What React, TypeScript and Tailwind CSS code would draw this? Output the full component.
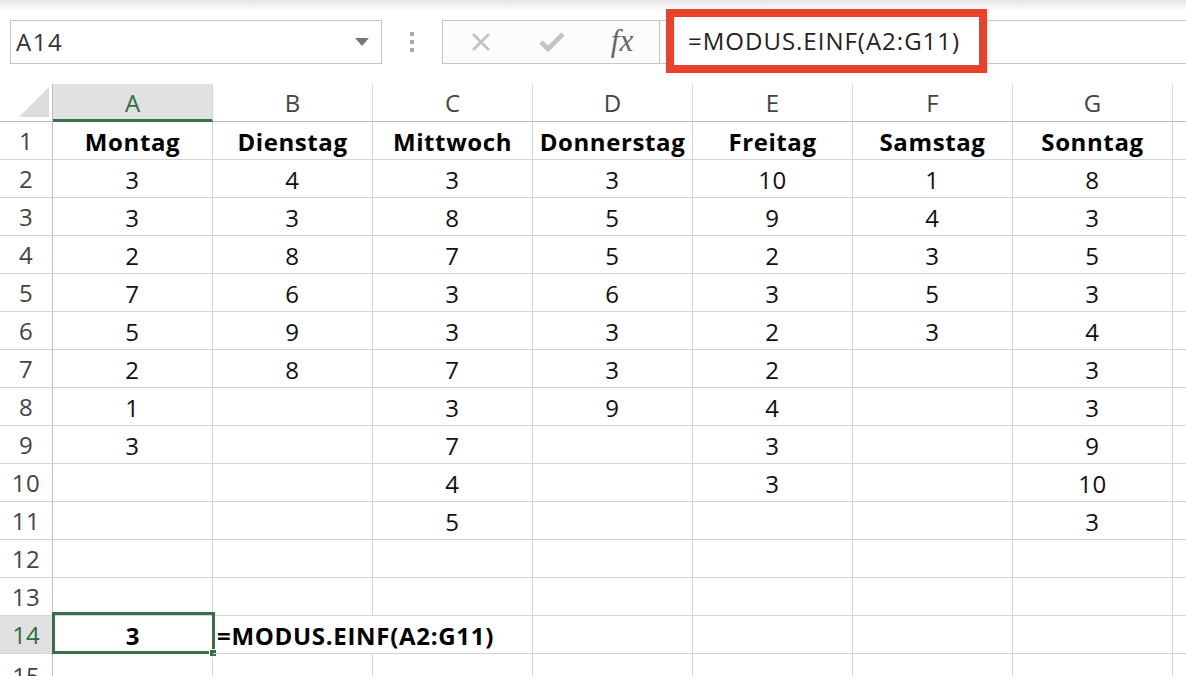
const cols = ["A", "B", "C", "D", "E", "F", "G"];

const rows: (string | number)[][] = [
  ["Montag", "Dienstag", "Mittwoch", "Donnerstag", "Freitag", "Samstag", "Sonntag"],
  [3, 4, 3, 3, 10, 1, 8],
  [3, 3, 8, 5, 9, 4, 3],
  [2, 8, 7, 5, 2, 3, 5],
  [7, 6, 3, 6, 3, 5, 3],
  [5, 9, 3, 3, 2, 3, 4],
  [2, 8, 7, 3, 2, "", 3],
  [1, "", 3, 9, 4, "", 3],
  [3, "", 7, "", 3, "", 9],
  ["", "", 4, "", 3, "", 10],
  ["", "", 5, "", "", "", 3],
  ["", "", "", "", "", "", ""],
  ["", "", "", "", "", "", ""],
];

const font = { fontFamily: '"Open Sans", "Noto Sans", sans-serif' };

export default function App() {
  return (
    <div className="w-[1186px] h-[676px] overflow-hidden bg-white text-[22px] text-[#222]" style={font}>
      {/* FORMULA BAR */}
      <div className="relative h-[84px] bg-gradient-to-b from-[#e6e6e6] via-white via-[14%] to-white">
        <div className="flex items-center pt-[20px] pl-[10px]">
          <div className="w-[372px] h-[44px] border border-[#c6c6c6] bg-white flex items-center justify-between pl-[5px] pr-[12px]">
            <span className="text-[#333] text-[24px] tracking-[1.5px]">A14</span>
            <span className="w-0 h-0 border-l-[7px] border-r-[7px] border-t-[8px] border-l-transparent border-r-transparent border-t-[#777]" />
          </div>
          <div className="w-[60px] flex flex-col items-center gap-[4px]">
            <span className="w-[4px] h-[4px] bg-[#a8a8a8]" />
            <span className="w-[4px] h-[4px] bg-[#a8a8a8]" />
            <span className="w-[4px] h-[4px] bg-[#a8a8a8]" />
          </div>
          <div className="w-[218px] h-[44px] border border-[#c6c6c6] bg-[#fcfcfc] flex items-center">
            <div className="w-[76px] flex justify-center">
              <svg width="22" height="22" viewBox="0 0 22 22" stroke="#c2c2c2" strokeWidth="2.6" fill="none">
                <path d="M3 3 L19 19 M19 3 L3 19" />
              </svg>
            </div>
            <div className="w-[66px] flex justify-center">
              <svg width="26" height="22" viewBox="0 0 26 22" stroke="#c4c4c4" strokeWidth="4.6" fill="none">
                <path d="M2 11 L9 18 L24 3" />
              </svg>
            </div>
            <div className="flex-1 flex justify-center">
              <span className="italic text-[31px] text-[#666] leading-none -mt-[4px]" style={{ fontFamily: '"Liberation Serif", serif' }}>
                fx
              </span>
            </div>
          </div>
          <div className="flex-1 h-[44px] border-y border-[#c6c6c6] bg-white" />
        </div>
        {/* highlight */}
        <div className="absolute left-[666px] top-[9px] w-[321px] h-[64px] border-[8px] border-[#e9412a] bg-white flex items-center pl-[14px]">
          <span className="text-[#222] text-[24px] tracking-[1px]">=MODUS.EINF(A2:G11)</span>
        </div>
      </div>

      {/* GRID */}
      <div className="grid grid-cols-[53px_repeat(7,160px)_1fr] auto-rows-[38px] text-[24px]">
        {/* header row */}
        <div className="border-r border-b border-[#bdbdbd] flex items-end justify-end pr-[3px] pb-[4px]">
          <svg width="30" height="30" viewBox="0 0 30 30">
            <path d="M30 0 L30 30 L0 30 Z" fill="#dcdcdc" />
          </svg>
        </div>
        {cols.map((c, i) => (
          <div
            key={c}
            className={
              i === 0
                ? "bg-[#e1e1e1] border-r border-[#d4d4d4] border-b-[3px] border-b-[#3b6e4a] flex items-center justify-center text-[#2f6b45] pt-[3px]"
                : "border-r border-b border-[#d9d9d9] border-b-[#bdbdbd] flex items-center justify-center text-[#444]"
            }
          >
            {c}
          </div>
        ))}
        <div className="border-b border-[#bdbdbd]" />

        {rows.map((r, ri) => (
          <Row key={ri} n={ri + 1} cells={r} bold={ri === 0} />
        ))}

        {/* row 14 */}
        <div className="bg-[#e1e1e1] border-r border-b border-[#bdbdbd] border-b-[#d4d4d4] flex items-center justify-center text-[#2f6b45]">
          14
        </div>
        <div className="relative border-r border-b border-[#d4d4d4] flex items-center justify-center font-bold text-black pt-[3px]">
          3
          <div className="absolute -top-[4px] -left-[1px] -right-[3px] -bottom-[1px] border-[3px] border-[#3b6e4a]" />
          <div className="absolute -right-[5px] -bottom-[4px] w-[8px] h-[8px] bg-[#3b6e4a] border border-white" />
        </div>
        <div className="relative border-b border-[#d4d4d4] flex items-center pt-[3px]">
          <span className="absolute left-[4px] whitespace-nowrap font-bold text-black z-10 tracking-[0.7px]">=MODUS.EINF(A2:G11)</span>
        </div>
        {[0, 1, 2, 3, 4].map((i) => (
          <div key={i} className={i === 0 ? "border-r border-b border-[#d4d4d4]" : "border-r border-b border-[#d4d4d4]"} />
        ))}
        <div className="border-b border-[#d4d4d4]" />

        {/* row 15 */}
        <div className="border-r border-[#bdbdbd] flex items-center justify-center text-[#444] pt-[6px]">15</div>
        {cols.map((c) => (
          <div key={c} className="border-r border-[#d4d4d4]" />
        ))}
        <div />
      </div>
    </div>
  );
}

function Row({ n, cells, bold }: { n: number; cells: (string | number)[]; bold: boolean }) {
  return (
    <>
      <div className="border-r border-b border-[#bdbdbd] border-b-[#d4d4d4] flex items-center justify-center text-[#444] tracking-[0.5px]">
        {n}
      </div>
      {cells.map((v, i) => (
        <div
          key={i}
          className={
            "border-r border-b border-[#d4d4d4] flex items-center justify-center pt-[3px] tracking-[0.6px] " +
            (bold ? "font-bold text-black" : "text-[#111]")
          }
        >
          {v}
        </div>
      ))}
      <div className="border-b border-[#d4d4d4]" />
    </>
  );
}
